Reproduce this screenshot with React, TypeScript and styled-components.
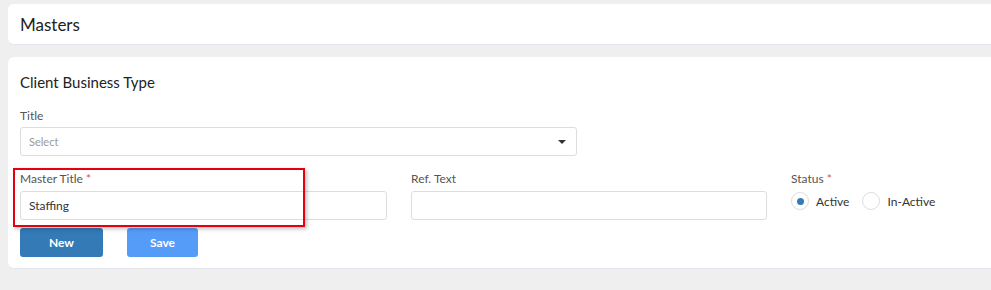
import React from 'react'
import styled, { createGlobalStyle } from 'styled-components'

const GlobalStyle = createGlobalStyle`
  * {
    box-sizing: border-box;
  }
  body {
    margin: 0;
    padding: 4px 0 0 8px;
    background: #efefef;
    overflow: hidden;
    font-family: Lato, "Open Sans", sans-serif;
    color: #333;
  }
`

const Card = styled.section`
  position: relative;
  width: 1000px;
  background: #fff;
  border-radius: 6px;
  border-bottom: 1px solid #e4e4ec;
`

const HeaderCard = styled(Card)`
  height: 41px;
  display: flex;
  align-items: center;
  padding: 0 12px;
  margin-bottom: 12px;
`

const PageTitle = styled.h1`
  margin: 0;
  font-size: 17px;
  font-weight: 400;
  color: #222;
`

const FormCard = styled(Card)`
  padding: 16px 12px 11px;
`

const SectionTitle = styled.h2`
  margin: 0 0 18px;
  font-size: 15px;
  line-height: 18px;
  font-weight: 400;
  color: #222;
`

const Field = styled.div`
  display: flex;
  flex-direction: column;
`

const Label = styled.label`
  font-size: 12px;
  line-height: 14px;
  color: #555;
  margin-bottom: 4px;
`

const Required = styled.span`
  color: #d9534f;
`

const SelectBox = styled.div`
  width: 557px;
  height: 29px;
  border: 1px solid #ddd;
  border-radius: 3px;
  display: flex;
  align-items: center;
  justify-content: space-between;
  padding: 0 10px 0 8px;
  font-size: 11px;
  color: #999;
`

const Caret = styled.span`
  width: 0;
  height: 0;
  border-left: 4px solid transparent;
  border-right: 4px solid transparent;
  border-top: 4px solid #333;
`

const Row = styled.div`
  display: grid;
  grid-template-columns: 367px 356px 1fr;
  column-gap: 24px;
  margin-top: 16px;
`

const Input = styled.div`
  height: 29px;
  border: 1px solid #ddd;
  border-radius: 3px;
  display: flex;
  align-items: center;
  padding: 0 8px;
  font-size: 12px;
  color: #333;
  margin-top: 1px;
`

const RadioGroup = styled.div`
  display: flex;
  align-items: center;
  height: 20px;
  margin-top: 1px;
`

const RadioOption = styled.label`
  display: flex;
  align-items: center;
  font-size: 12px;
  color: #333;
  margin-right: 13px;
`

const RadioCircle = styled.span<{ checked?: boolean }>`
  width: 18px;
  height: 18px;
  border: 1px solid #ddd;
  border-radius: 50%;
  display: flex;
  align-items: center;
  justify-content: center;
  margin-right: 7px;

  &::after {
    content: '';
    width: 7px;
    height: 7px;
    border-radius: 50%;
    background: ${({ checked }) => (checked ? '#337ab7' : 'transparent')};
  }
`

const Actions = styled.div`
  display: flex;
  gap: 24px;
  margin-top: 8px;
`

const Button = styled.button<{ tone: 'primary' | 'light' }>`
  height: 29px;
  border: 0;
  border-radius: 3px;
  font-family: inherit;
  font-size: 12px;
  font-weight: 700;
  color: #fff;
  background: ${({ tone }) => (tone === 'primary' ? '#337ab7' : '#559cf9')};
  width: ${({ tone }) => (tone === 'primary' ? '83px' : '71px')};
`

const Highlight = styled.div`
  position: absolute;
  left: 5px;
  top: 111px;
  width: 292px;
  height: 59px;
  border: 2px solid #e3000f;
  box-shadow: 2px 2px 4px rgba(0, 0, 0, 0.25);
  pointer-events: none;
`

export default function App() {
  return (
    <>
      <GlobalStyle />
      <HeaderCard>
        <PageTitle>Masters</PageTitle>
      </HeaderCard>
      <FormCard>
        <SectionTitle>Client Business Type</SectionTitle>
        <Field>
          <Label>Title</Label>
          <SelectBox>
            Select
            <Caret />
          </SelectBox>
        </Field>
        <Row>
          <Field>
            <Label>
              Master Title <Required>*</Required>
            </Label>
            <Input>Staffing</Input>
          </Field>
          <Field>
            <Label>Ref. Text</Label>
            <Input />
          </Field>
          <Field>
            <Label>
              Status <Required>*</Required>
            </Label>
            <RadioGroup>
              <RadioOption>
                <RadioCircle checked />
                Active
              </RadioOption>
              <RadioOption>
                <RadioCircle />
                In-Active
              </RadioOption>
            </RadioGroup>
          </Field>
        </Row>
        <Actions>
          <Button tone="primary">New</Button>
          <Button tone="light">Save</Button>
        </Actions>
        <Highlight />
      </FormCard>
    </>
  )
}
